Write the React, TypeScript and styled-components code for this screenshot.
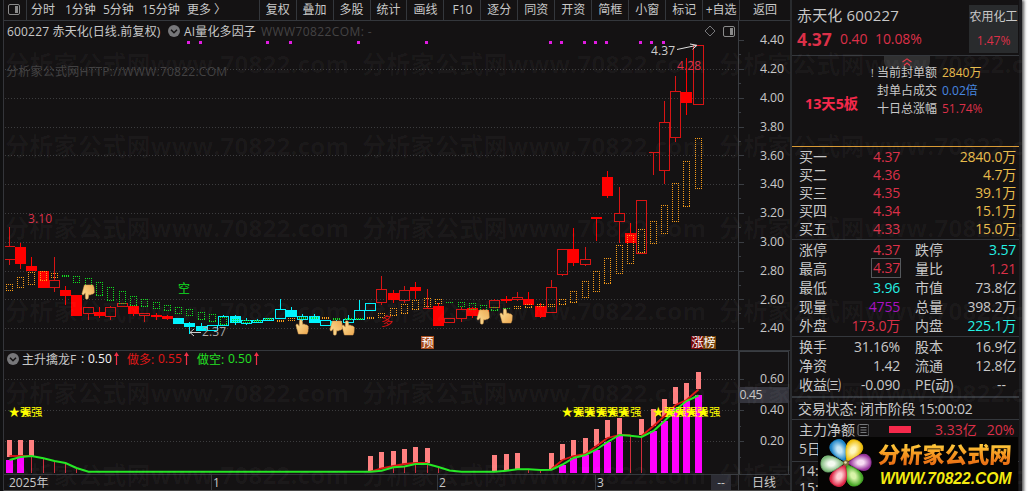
import React from 'react'
import styled, { createGlobalStyle, css } from 'styled-components'

const RED = '#e01818'
const CYAN = '#00f4ff'
const UP = '#dc3048'
const GOLD = '#e8bc4c'
const LINE = '#34373c'
const DOT = '#3c3c3e'

const GlobalStyle = createGlobalStyle`
  * { box-sizing: border-box; }
  body {
    margin: 0;
    background: #fff;
    overflow: hidden;
    font-family: 'Open Sans', 'Noto Sans CJK SC', sans-serif;
    font-size: 12px;
    color: #c8c8c8;
  }
`

const Window = styled.div`
  position: relative;
  display: flex;
  width: 1022px;
  height: 491px;
  overflow: hidden;
  background: #141213;
`
const Shadow = styled.div`
  width: 1022px;
  height: 491px;
  box-shadow: 1px 1px 3px 1px #555;
`
const Gutter = styled.div`
  width: 4px;
  border-right: 1px solid #34353a;
  background: #101011;
`
const Left = styled.main`
  width: 786px;
  display: flex;
  flex-direction: column;
`

const Toolbar = styled.nav`
  height: 21px;
  display: flex;
  border-bottom: 1px solid ${LINE};
  line-height: 19px;
  white-space: nowrap;
`
const IconCell = styled.div`
  width: 23px;
  padding: 4px 0 0 4px;
  border-right: 1px solid ${LINE};
  line-height: 0;
`
const Periods = styled.div`
  width: 233px;
  display: flex;
  padding-left: 4px;
  border-right: 1px solid ${LINE};
`
const Period = styled.span<{ $w: number }>`
  width: ${p => p.$w}px;
`
const Tool = styled.div<{ $w?: number; $last?: boolean }>`
  width: ${p => p.$w || 37}px;
  text-align: center;
  border-right: ${p => (p.$last ? 'none' : `1px solid ${LINE}`)};
`

const MainHead = styled.header`
  height: 19px;
  display: flex;
  align-items: center;
  padding: 1px 0 0 3px;
  white-space: pre;
`
const HeadText = styled.span<{ $w?: number; $color?: string; $gap?: number; $track?: number }>`
  color: ${p => p.$color || '#c8c8c8'};
  margin-left: ${p => p.$gap || 0}px;
  letter-spacing: ${p => p.$track || 0}px;
  ${p => p.$w && css`width: ${p.$w}px;`}
`
const HeadIcons = styled.div`
  display: flex;
  gap: 7px;
  margin: 0 55px 0 auto;
  align-items: center;
`
const SubHead = styled(MainHead)`
  height: 18px;
  padding: 0 0 2px 3px;
  border-top: 1px solid ${LINE};
`
const Plot = styled.svg`
  display: block;
  flex: none;
  overflow: visible;
  position: relative;
`
const TimeAxis = styled.footer`
  height: 17px;
  display: flex;
  border-top: 1px solid ${LINE};
  border-bottom: 1px solid #4a4a4a;
  line-height: 15px;
  font-size: 12px;
`
const Tick = styled.div<{ $w: number; $first?: boolean }>`
  width: ${p => p.$w}px;
  padding-left: ${p => (p.$first ? 5 : 1)}px;
  border-left: ${p => (p.$first ? 'none' : `1px solid ${LINE}`)};
`
const Dash = styled.div`
  width: 20px;
  text-align: center;
  background: #2c2c34;
  margin-right: 7px;
`
const CycleCell = styled.div`
  flex: 1;
  padding-left: 13px;
  border-left: 1px solid ${LINE};
`

const Side = styled.aside`
  width: 232px;
  border-left: 2px solid #292b2e;
  border-right: 3px solid #1d1d20;
  display: flex;
  flex-direction: column;

  > section {
    flex: none;
  }
`
const Quote = styled.section`
  height: 56px;
  display: flex;
  justify-content: space-between;
  padding: 5px 1px 0 5px;
  border-bottom: 1px solid ${LINE};
`
const Name = styled.div`
  font-size: 15px;
  line-height: 20px;
  letter-spacing: 0.15px;
  white-space: nowrap;
`
const Prices = styled.div`
  display: flex;
  align-items: center;
  height: 27px;
  color: ${UP};
  font-size: 14px;
  letter-spacing: -0.1px;
  white-space: nowrap;
`
const Big = styled.b`
  font-size: 17.5px;
  width: 43px;
`
const Change = styled.span`
  width: 35px;
`
const Industry = styled.div`
  width: 49px;
  height: 48px;
  background: #292b2d;
  text-align: center;
  line-height: 23px;
  white-space: nowrap;
`
const IndustryRate = styled.div`
  color: ${UP};
  line-height: 25px;
`
const Board = styled.section`
  position: relative;
  height: 91px;
  display: flex;
  padding-top: 8px;
  border-bottom: 1px solid #d99a35;
`
const PullTab = styled.div`
  position: absolute;
  left: 92px;
  top: 0;
  width: 46px;
  height: 12px;
  border-radius: 0 0 6px 6px;
  background: #303031;
  text-align: center;
  line-height: 0;
  padding-top: 2px;
`
const Streak = styled.b`
  width: 79px;
  padding: 30px 0 0 13px;
  font-size: 14.3px;
  line-height: 20px;
  color: #f5294b;
  white-space: nowrap;
`
const BoardList = styled.div`
  position: relative;
  line-height: 18px;
  white-space: nowrap;
`
const BoardRow = styled.div`
  display: flex;
`
const Mark = styled.span`
  width: 6px;
  font-size: 10px;
`
const BoardLabel = styled.span`
  width: 65px;
`
const Colored = styled.span<{ $color: string }>`
  color: ${p => p.$color};
`

const Bids = styled.section`
  height: 93px;
  padding: 1px 1px 0 7px;
  font-size: 14px;
  line-height: 18px;
  border-bottom: 1px solid ${LINE};
`
const Row = styled.div`
  display: flex;
  white-space: nowrap;
`
const Label = styled.span<{ $w: number }>`
  width: ${p => p.$w}px;
`
const Value = styled.span<{ $w: number; $color?: string; $boxed?: boolean }>`
  width: ${p => p.$w}px;
  text-align: right;
  letter-spacing: -0.2px;
  color: ${p => p.$color || '#c8c8c8'};
  ${p => p.$boxed && css`
    outline: 1px solid #55585c;
    height: 18px;
    line-height: 18px;
  `}
`
const Stats = styled.section<{ $h: number }>`
  height: ${p => p.$h}px;
  padding: 0 1px 0 7px;
  font-size: 14px;
  line-height: 19px;
  border-bottom: 1px solid ${LINE};
`
const Gap = styled.span<{ $w: number }>`
  width: ${p => p.$w}px;
  flex: none;
`
const Status = styled.section`
  height: 23px;
  padding-left: 6px;
  border-top: 1px solid ${LINE};
  border-bottom: 1px solid ${LINE};
  font-size: 14px;
  letter-spacing: -0.2px;
  line-height: 21px;
  white-space: nowrap;
`
const Fund = styled.section`
  height: 42px;
  padding: 0 2px 0 7px;
  font-size: 14px;
  line-height: 19px;
  border-bottom: 1px solid ${LINE};
`
const FundBar = styled.span`
  width: 22px;
  height: 7px;
  margin: 6px 24px 0 20px;
  background: #f5294b;
`
const Ticks = styled.section`
  padding-left: 7px;
  font-size: 14px;
  line-height: 17px;
`

const Watermarks = styled.div`
  position: absolute;
  left: 5px;
  top: 46px;
  width: 1016px;
  pointer-events: none;
`
const WatermarkRow = styled.div`
  height: 82.2px;
  display: flex;
  white-space: nowrap;
  line-height: 36px;
  font-size: 24px;
  font-weight: 700;
  color: rgba(255, 255, 255, 0.036);
`
const WatermarkText = styled.span`
  width: 357px;
  flex: none;
  letter-spacing: 0.3px;
`
const Credit = styled.div`
  position: absolute;
  left: 6px;
  top: 63px;
  line-height: 18px;
  color: #424142;
  letter-spacing: 0.25px;
`

const Logo = styled.div`
  position: absolute;
  left: 818px;
  top: 437px;
  width: 200px;
  height: 54px;
  display: flex;
  background: #050403;
`
const LogoTexts = styled.div`
  width: 140px;
  white-space: nowrap;
`
const LogoName = styled.div`
  padding-top: 2px;
  font-size: 22.3px;
  line-height: 31px;
  font-weight: 900;
  transform: skewX(-3deg);
  background: linear-gradient(#ffc83a 25%, #f4921e 55%, #e86c14 85%);
  -webkit-background-clip: text;
  background-clip: text;
  color: transparent;
`
const LogoUrl = styled.div`
  padding-left: 2px;
  font-family: 'Liberation Sans', Arial, sans-serif;
  font-size: 15.6px;
  line-height: 18px;
  font-weight: 700;
  font-style: italic;
  color: #f4ea10;
`

// [high, top, bottom, low, kind] h = hollow, f = filled, o = open sides; upper case is cyan
type Candle = [number, number, number, number, string]
const candles: Candle[] = [
  [227, 246, 259, 265, 'o'], [243, 247, 264, 269, 'f'], [257, 266, 271, 271, 'f'],
  [271, 271, 288, 288, 'f'], [257, 280, 287, 292, 'h'], [286, 290, 296, 305, 'f'],
  [295, 295, 316, 316, 'f'], [307, 307, 313, 320, 'h'], [307, 312, 316, 318, 'f'],
  [306, 307, 316, 320, 'h'], [303, 303, 306, 306, 'h'], [306, 306, 314, 316, 'f'],
  [313, 313, 315, 322, 'h'], [313, 315, 317, 320, 'f'], [315, 316, 319, 320, 'f'],
  [318, 318, 324, 324, 'F'], [322, 323, 327, 334, 'F'], [323, 326, 331, 331, 'F'],
  [325, 325, 330, 330, 'H'], [315, 316, 325, 325, 'H'], [315, 316, 323, 325, 'F'],
  [318, 320, 323, 325, 'H'], [319, 320, 322, 323, 'H'], [318, 318, 320, 321, 'H'],
  [299, 309, 318, 319, 'H'], [307, 310, 317, 317, 'F'], [314, 316, 319, 321, 'H'],
  [314, 316, 323, 323, 'F'], [320, 320, 325, 325, 'H'], [320, 321, 325, 325, 'H'],
  [315, 319, 322, 323, 'H'], [300, 310, 319, 319, 'H'], [303, 303, 310, 310, 'H'],
  [276, 289, 302, 305, 'h'], [290, 293, 300, 303, 'f'], [286, 290, 300, 303, 'h'],
  [282, 287, 291, 299, 'f'], [289, 308, 308, 308, 'o'], [303, 306, 326, 326, 'f'],
  [318, 318, 322, 322, 'h'], [307, 309, 318, 322, 'h'], [307, 308, 316, 318, 'f'],
  [309, 310, 316, 316, 'f'], [299, 300, 307, 307, 'h'], [296, 299, 301, 303, 'f'],
  [292, 297, 299, 301, 'h'], [292, 299, 305, 305, 'f'], [303, 306, 317, 318, 'f'],
  [280, 287, 312, 312, 'h'], [249, 249, 274, 276, 'h'], [228, 249, 263, 266, 'f'],
  [247, 259, 264, 266, 'h'], [217, 217, 219, 241, 'f'], [171, 177, 196, 198, 'f'],
  [187, 213, 221, 243, 'h'], [223, 233, 243, 243, 'f'], [200, 200, 253, 253, 'h'],
  [152, 152, 152, 175, 'o'], [101, 122, 170, 184, 'h'], [76, 91, 137, 142, 'h'],
  [58, 92, 103, 115, 'f'], [45, 45, 104, 104, 'h'],
]

const O = '#f89c18'
const G = '#10e020'
// dotted trend boxes, one per candle: [top, bottom, colour]
const boxes: [number, number, string][] = [
  [284, 290, O], [277, 287, O], [272, 284, O], [271, 280, O], [273, 277, O], [275, 276, G],
  [276, 282, G], [278, 288, G], [282, 295, G], [287, 300, G], [291, 303, G], [296, 305, G],
  [299, 306, G], [302, 308, G], [305, 310, G], [307, 313, G], [309, 315, G], [312, 319, G],
  [314, 321, G], [317, 324, G], [319, 321, G], [320, 322, G], [320, 321, G], [318, 319, G],
  [320, 321, O], [318, 320, O], [317, 318, G], [317, 318, G], [317, 318, O], [318, 319, G],
  [318, 319, G], [318, 319, G], [317, 318, O], [313, 317, O], [308, 315, O], [304, 313, O],
  [300, 309, O], [298, 306, O], [299, 303, O], [302, 302, G], [302, 306, G], [303, 309, G],
  [305, 310, G], [307, 310, G], [308, 308, G], [306, 308, O], [304, 307, O], [304, 306, O],
  [304, 306, O], [299, 304, O], [291, 302, O], [281, 297, O], [271, 291, O], [258, 283, O],
  [245, 273, O], [235, 263, O], [229, 252, O], [221, 243, O], [205, 233, O], [183, 221, O],
  [161, 206, O], [138, 188, O],
]

const x = (i: number) => Math.floor(9.2 + 11.295 * i) + 0.5

const CandleMark = ({ i, c }: { i: number; c: Candle }) => {
  const [hi, top, bot, lo, kind] = c
  const k = kind.toLowerCase()
  const color = kind === k ? (k === 'f' ? '#ff0000' : '#d81414') : CYAN
  const cx = x(i)
  return (
    <g stroke={color} fill="none" shapeRendering="crispEdges">
      {hi < top && <path d={`M${cx} ${hi}V${top}`} />}
      {lo > bot && <path d={`M${cx} ${bot}V${lo}`} />}
      {k === 'f' && <rect x={cx - 5.5} y={top} width={11} height={bot - top} fill={color} stroke="none" />}
      {k === 'h' && <rect x={cx - 5} y={top + 0.5} width={10} height={bot - top} />}
      {k === 'o' && <path d={`M${cx - 5} ${top + 0.5}h10M${cx - 5} ${bot + 0.5}h10`} />}
    </g>
  )
}

// each side is dashed on its own, so the dots keep to the pixel grid
const DottedBox = ({ cx, top, bot, color }: { cx: number; top: number; bot: number; color: string }) => {
  const l = cx - 3.5
  const h = bot - top
  return (
    <path
      d={`M${l} ${top + 0.5}h7M${l} ${bot + 0.5}h7` + (h > 2 ? `M${l + 0.5} ${top}v${h + 1}M${l + 6.5} ${top}v${h + 1}` : '')}
      fill="none" stroke={color} strokeDasharray="1 1" shapeRendering="crispEdges"
    />
  )
}

const Hand = ({ cx, cy, down }: { cx: number; cy: number; down?: boolean }) => (
  <path
    transform={`translate(${cx} ${cy}) scale(1 ${down ? -1 : 1})`}
    d="M-2.5-6.6Q-1-8 .2-6.6L.8-2.5 2-3 3.4-2.2 5-2 6.3-.6 6 4.5 5 7H-3.6L-6-1.6-5.4-3-4-2.6-2.8-.8Z"
    fill="url(#skin)"
    stroke="#d99a4c"
    strokeWidth=".5"
  />
)

const dots = [188, 200, 267, 290, 358, 426, 550, 561, 584, 595, 606, 640, 651, 663]
const levels = [4.4, 4.2, 4.0, 3.8, 3.6, 3.4, 3.2, 3.0, 2.8, 2.6, 2.4]

const PriceChart = () => (
  <Plot width={786} height={310} viewBox="4 40 786 310" fontSize={12}>
    <defs>
      <linearGradient id="skin" x1="0" y1="0" x2="1" y2="1">
        <stop offset="0" stopColor="#ffe49c" />
        <stop offset="1" stopColor="#eda850" />
      </linearGradient>
    </defs>
    <g shapeRendering="crispEdges" stroke="#3a3d42">
      <path d="M738.5 21V350" />
      {levels.map((v, n) => {
        const y = Math.floor(40.6 + n * 28.8) + 0.5
        return (
          <g key={v}>
            {n > 0 && <path d={`M5 ${y}H737`} stroke={DOT} strokeDasharray="1 2" />}
            <path d={`M739 ${y}h5`} />
            {n < 10 && <path d={`M739 ${y + 14}h2`} />}
          </g>
        )
      })}
    </g>
    {levels.map((v, n) => (
      <text key={v} x={760} y={44.4 + n * 28.8} fill="#c8c8c8" fontSize={12.3} textLength={24}>{v.toFixed(2)}</text>
    ))}
    {candles.map((c, i) => <CandleMark key={i} i={i} c={c} />)}
    {boxes.map(([top, bot, color], i) => (
      <DottedBox key={i} cx={x(i)} top={top} bot={bot} color={color} />
    ))}
    {dots.map(d => <rect key={d} x={d - 1} y={41} width={3} height={3} fill="#e01ce0" />)}
    <Hand cx={88} cy={292} down />
    <Hand cx={302} cy={327} />
    <Hand cx={336} cy={328} down />
    <Hand cx={348} cy={328} />
    <Hand cx={483} cy={317} down />
    <Hand cx={506} cy={316} />
    <text x={28} y={223} fill={UP} textLength={24}>3.10</text>
    <text x={677} y={70} fill={UP} textLength={24}>4.28</text>
    <text x={651} y={55} fill="#ccc" textLength={24}>4.37</text>
    <path d="M677 49.5L696 45.5M690 44l7 1.3-4.5 4" stroke="#ddd" fill="none" />
    <text x={202} y={336} fill="#aaa" textLength={24}>2.37</text>
    <path d="M201 332.5H190M194 329l-4 3.5 4 3.5" stroke="#ccc" fill="none" />
    <text x={178} y={293} fill={G}>空</text>
    <text x={381} y={326} fill="#e01010">多</text>
    <rect x={421} y={336} width={13} height={13} fill="#a84c1c" />
    <rect x={691} y={336} width={12} height={13} fill="#780808" />
    <rect x={703} y={336} width={13} height={13} fill="#744008" />
    <g fill="#fff">
      <text x={421.5} y={347}>预</text>
      <text x={691.5} y={347}>涨榜</text>
    </g>
  </Plot>
)

// salmon bars [index, top, bottom]
const salmon = [
  [0, 440, 457], [1, 440, 456], [2, 440, 456], [32, 456, 472], [33, 452, 468], [34, 451, 467],
  [35, 449, 464], [36, 447, 463], [37, 448, 463], [43, 455, 472], [44, 454, 470], [45, 453, 469],
  [48, 453, 469], [49, 444, 460], [50, 440, 457], [51, 438, 454], [52, 429, 446], [53, 420, 438],
  [54, 418, 435], [56, 419, 435], [57, 409, 426], [58, 399, 417], [59, 387, 404], [60, 383, 400],
  [61, 372, 389],
]
// magenta bars [index, top]
const magenta = [
  [0, 460], [1, 456], [49, 465], [50, 458], [51, 455], [52, 450], [53, 442], [54, 435],
  [57, 431], [58, 421], [59, 408], [60, 401], [61, 395],
]
const thin = [
  [2, 456], [3, 459], [4, 462], [5, 464], [6, 469], [34, 468], [35, 467], [36, 465], [37, 465],
  [38, 467], [46, 470], [47, 470], [55, 436], [56, 437],
]
const green = [
  [0, 460], [1, 457], [2, 456], [3, 458.3], [4, 461], [5, 463], [6, 468], [7, 471.7], [32, 471.7],
  [33, 470.7], [34, 467.3], [35, 466.5], [36, 464], [37, 464], [38, 467], [39, 470.5], [40, 471.7],
  [43, 471.7], [44, 470.7], [45, 469.3], [46, 469.3], [47, 470], [48, 469.7], [49, 464.5],
  [50, 458], [51, 455], [52, 449.5], [53, 442], [54, 435], [55, 435.7], [56, 437], [57, 431],
  [58, 421], [59, 410], [60, 401], [61, 395.5],
]
const redLines = [
  [[0, 456], [1, 456], [2, 456]],
  [[32, 471.5], [33, 468.3], [34, 466], [35, 464], [36, 463], [37, 463]],
  [[48, 469], [49, 460], [50, 456], [51, 454], [52, 446], [53, 438], [54, 434.8], [55, 435.2]],
  [[56, 436], [57, 426], [58, 416], [59, 405], [60, 400], [61, 389.5]],
]
const stars = [0, 1, 49, 50, 51, 52, 53, 54, 57, 58, 59, 60, 61]
const pts = (a: number[][]) => a.map(([i, y]) => `${x(i)},${y}`).join(' ')

const IndicatorChart = () => (
  <Plot width={786} height={106} viewBox="4 368 786 106" fontSize={12}>
    <g shapeRendering="crispEdges" fill="none" stroke="#3a3d42">
      {[379.5, 410.5, 441.5].map(y => (
        <g key={y}>
          <path d={`M5 ${y}H737`} stroke={DOT} strokeDasharray="1 2" />
          <path d={`M739 ${y}h5`} />
          <path d={`M739 ${y + 16}h2`} />
        </g>
      ))}
      <path d="M738.5 350V474M739.5 474V351.5H788.5V474" />
    </g>
    <rect x={739} y={387} width={50} height={16} fill="#34343c" />
    <g fill="#c8c8c8" fontSize={12.3}>
      <text x={760} y={383} textLength={24}>0.60</text>
      <text x={760} y={414} textLength={24}>0.40</text>
      <text x={760} y={445} textLength={24}>0.20</text>
      <text x={739.5} y={398.5} textLength={23}>0.45</text>
    </g>
    <g shapeRendering="crispEdges">
      {thin.map(([i, y]) => <rect key={i} x={x(i) - 0.5} y={y} width={1} height={473 - y} fill="#d02c3c" />)}
      {salmon.map(([i, y, b]) => <rect key={i} x={x(i) - 2.5} y={y} width={5} height={b - y} fill="#ff8080" />)}
      {magenta.map(([i, y]) => <rect key={i} x={x(i) - 3.5} y={y} width={7} height={473 - y} fill="#ff00ff" />)}
    </g>
    {redLines.map((l, n) => (
      <polyline key={n} points={pts(l)} fill="none" stroke="#e01414" strokeWidth={1.8} />
    ))}
    <polyline points={pts(green)} fill="none" stroke="#24e824" strokeWidth={2} />
    {stars.map(i => (
      <text key={i} x={x(i) - 1} y={416.3} fill="#ffff00" fontSize={11.5}>★强</text>
    ))}
  </Plot>
)

const PanelIcon = () => (
  <svg width="12" height="11" viewBox="0 0 12 11">
    <rect x=".5" y=".5" width="11" height="10" rx="1.5" fill="none" stroke="#8a8a8a" />
    <rect x="7" y="2" width="3" height="7" fill="#8a8a8a" />
  </svg>
)

const RoundChevron = () => (
  <svg width="12" height="12" viewBox="0 0 12 12">
    <circle cx="6" cy="6" r="6" fill="#77777a" />
    <path d="M3 4.8l3 3 3-3" fill="none" stroke="#141213" strokeWidth="1.5" />
  </svg>
)

const ArrowUp = () => (
  <svg width="5" height="13" viewBox="0 0 5 13">
    <path d="M2.5 13V2" stroke="#f03048" strokeWidth="1.2" />
    <path d="M0 4L2.5 0 5 4Z" fill="#f03048" />
  </svg>
)

const petals = [
  ['#1c84c8', '#c4e6f6', -27], ['#f0c010', '#fff8c0', 29], ['#98349c', '#f8dcf4', 88],
  ['#48a828', '#d8f4a8', 150], ['#dc2444', '#ffd0d4', 207], ['#7cb878', '#f4faf0', 267],
] as const

const Flower = () => (
  <svg width="60" height="54" viewBox="0 0 60 54">
    <defs>
      {petals.map(([dark, light], n) => (
        <radialGradient key={n} id={`petal${n}`} cx=".5" cy=".45" r=".55">
          <stop offset="0" stopColor={light} />
          <stop offset=".25" stopColor={light} />
          <stop offset=".85" stopColor={dark} />
        </radialGradient>
      ))}
    </defs>
    {petals.map(([dark, , a], n) => (
      <path key={n} transform={`translate(28 26) rotate(${a})`}
        d="M0-2C-4-7-10-15-7.500-21C-5-26.500 5-26.500 7.500-21C10-15 4-7 0-2Z"
        fill={`url(#petal${n})`} stroke={dark} strokeWidth=".8" />
    ))}
    <circle cx="28" cy="26" r="3" fill="#7a6c38" />
    <circle cx="27.500" cy="25.500" r="1.300" fill="#e8e0b0" />
  </svg>
)

const periods: [string, number][] = [['分时', 34], ['1分钟', 38], ['5分钟', 39], ['15分钟', 45], ['更多 〉', 50]]
const tools = ['复权', '叠加', '多股', '统计', '画线', 'F10', '逐分', '同资', '开资', '简框', '小窗', '标记']

const bids = [
  ['买一', '4.37', '2840.0万'], ['买二', '4.36', '4.7万'], ['买三', '4.35', '39.1万'],
  ['买四', '4.34', '15.1万'], ['买五', '4.33', '15.0万'],
]
const TEAL = '#24f0e4'
const stats = [
  ['涨停', '4.37', UP, '跌停', '3.57', TEAL],
  ['最高', '4.37', UP, '量比', '1.21', UP],
  ['最低', '3.96', TEAL, '市值', '73.8亿', ''],
  ['现量', '4755', '#a810c0', '总量', '398.2万', ''],
  ['外盘', '173.0万', UP, '内盘', '225.1万', TEAL],
]
const stats2 = [
  ['换手', '31.16%', '', '股本', '16.9亿', ''],
  ['净资', '1.42', '', '流通', '12.8亿', ''],
  ['收益㈢', '-0.090', '', 'PE(动)', '--\u00a0\u00a0\u00a0', ''],
]

const StatRow = ({ r }: { r: string[] }) => {
  const boxed = r[0] === '最高'
  return (
    <Row>
      <Label $w={boxed ? 73 : 45}>{r[0]}</Label>
      <Value $w={boxed ? 28 : 56} $color={r[2]} $boxed={boxed}>{r[1]}</Value>
      <Gap $w={15} />
      <Label $w={45}>{r[3]}</Label>
      <Value $w={56} $color={r[5]}>{r[4]}</Value>
    </Row>
  )
}

const SidePanel = () => (
  <Side>
    <Quote>
      <div>
        <Name>赤天化 600227</Name>
        <Prices><Big>4.37</Big><Change>0.40</Change>10.08%</Prices>
      </div>
      <Industry>农用化工<IndustryRate>1.47%</IndustryRate></Industry>
    </Quote>
    <Board>
      <PullTab>
        <svg width="10" height="8" viewBox="0 0 10 8">
          <path d="M.5 4L5 .8 9.500 4M2 7.500L5 5l3 2.500" fill="none" stroke="#e83848" strokeWidth="1.100" />
        </svg>
      </PullTab>
      <Streak>13天5板</Streak>
      <BoardList>
        <BoardRow><Mark>!</Mark><BoardLabel>当前封单额</BoardLabel><Colored $color={GOLD}>2840万</Colored></BoardRow>
        <BoardRow><Mark /><BoardLabel>封单占成交</BoardLabel><Colored $color="#4888e0">0.02倍</Colored></BoardRow>
        <BoardRow><Mark /><BoardLabel>十日总涨幅</BoardLabel><Colored $color={UP}>51.74%</Colored></BoardRow>
      </BoardList>
    </Board>
    <Bids>
      {bids.map(([name, price, vol]) => (
        <Row key={name}>
          <Label $w={45}>{name}</Label>
          <Value $w={56} $color={UP}>{price}</Value>
          <Value $w={116} $color={GOLD}>{vol}</Value>
        </Row>
      ))}
    </Bids>
    <Stats $h={97}>{stats.map(r => <StatRow key={r[0]} r={r} />)}</Stats>
    <Stats $h={60}>{stats2.map(r => <StatRow key={r[0]} r={r} />)}</Stats>
    <Status>交易状态: 闭市阶段 15:00:02</Status>
    <Fund>
      <Row>
        <span>主力净额</span>
        <svg width="14" height="19" viewBox="0 0 14 19">
          <rect x="3" y="4.500" width="11" height="11" rx="1.500" fill="none" stroke="#77797c" />
          <path d="M5.500 7.500h6M5.500 10h6M5.500 12.500h6" stroke="#77797c" />
        </svg>
        <FundBar />
        <Colored $color={UP}>3.33亿</Colored>
        <Gap $w={10} />
        <Colored $color={UP}>20%</Colored>
      </Row>
      <Row>5日</Row>
    </Fund>
    <Ticks>
      <Row>14:</Row>
      <Row>15:</Row>
    </Ticks>
  </Side>
)

const App = () => (
  <>
    <GlobalStyle />
    <Shadow>
      <Window>
        <Gutter />
        <Left>
          <Toolbar>
            <IconCell><PanelIcon /></IconCell>
            <Periods>
              {periods.map(([t, w]) => <Period key={t} $w={w}>{t}</Period>)}
            </Periods>
            {tools.map(t => <Tool key={t}>{t}</Tool>)}
            <Tool>+自选</Tool>
            <Tool $w={50} $last>返回</Tool>
          </Toolbar>
          <MainHead>
            <HeadText $w={161} $track={0.17}>600227 赤天化(日线.前复权)</HeadText>
            <RoundChevron />
            <HeadText $w={77} $gap={4} $track={0.15}>AI量化多因子</HeadText>
            <HeadText $color="#444344" $track={0.4}>WWW70822COM: -</HeadText>
            <HeadIcons>
              <svg width="12" height="12" viewBox="0 0 12 12">
                <path d="M6 1l5 5-5 5-5-5z" fill="none" stroke="#77777a" />
              </svg>
              <PanelIcon />
            </HeadIcons>
          </MainHead>
          <PriceChart />
          <SubHead>
            <RoundChevron />
            <HeadText $w={59} $gap={3}>主升擒龙F</HeadText>
            <HeadText $w={7} $color="#f4f4f4">:</HeadText>
            <HeadText $w={26} $color="#f4f4f4">0.50</HeadText>
            <ArrowUp />
            <HeadText $w={31} $gap={8} $color={RED}>做多:</HeadText>
            <HeadText $w={26} $color={RED}>0.55</HeadText>
            <ArrowUp />
            <HeadText $w={31} $gap={8} $color="#24e024">做空:</HeadText>
            <HeadText $w={26} $color="#24e024">0.50</HeadText>
            <ArrowUp />
          </SubHead>
          <IndicatorChart />
          <TimeAxis>
            <Tick $w={207} $first>2025年</Tick>
            <Tick $w={226}>1</Tick>
            <Tick $w={158}>2</Tick>
            <Tick $w={116}>3</Tick>
            <Dash>--</Dash>
            <CycleCell>日线</CycleCell>
          </TimeAxis>
        </Left>
        <SidePanel />
        <Watermarks>
          {[0, 1, 2, 3, 4, 5].map(r => (
            <WatermarkRow key={r}>
              {[0, 1, 2].map(c => <WatermarkText key={c}>分析家公式网www.70822.com</WatermarkText>)}
            </WatermarkRow>
          ))}
        </Watermarks>
        <Credit>分析家公式网HTTP://WWW.70822.COM</Credit>
        <Logo>
          <Flower />
          <LogoTexts>
            <LogoName>分析家公式网</LogoName>
            <LogoUrl>WWW.70822.COM</LogoUrl>
          </LogoTexts>
        </Logo>
      </Window>
    </Shadow>
  </>
)

export default App
